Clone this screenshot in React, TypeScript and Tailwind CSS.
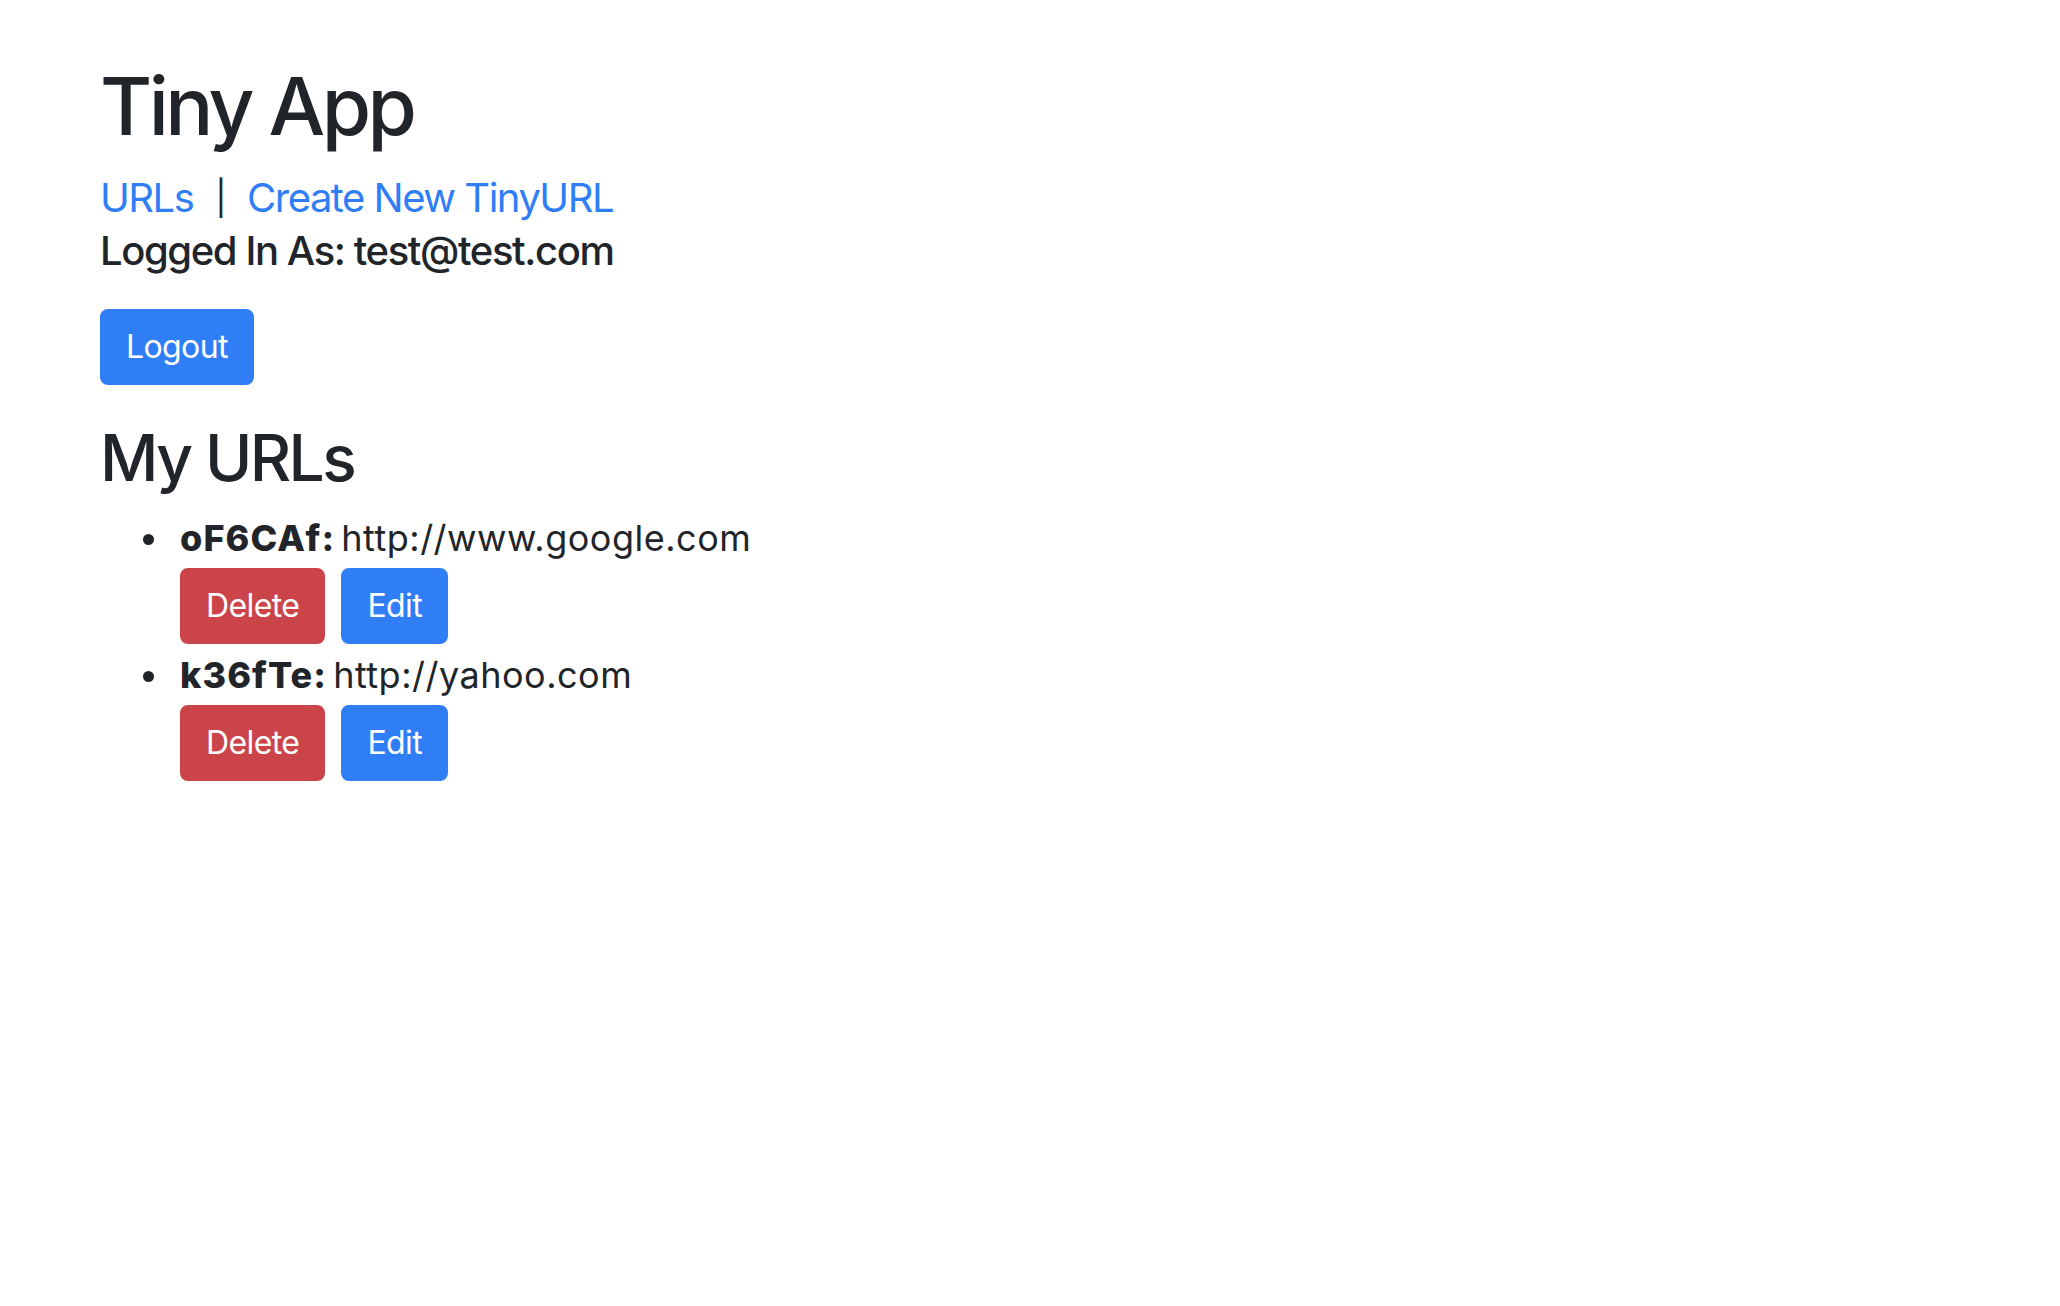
const urls = [
  { id: "oF6CAf", longURL: "http://www.google.com" },
  { id: "k36fTe", longURL: "http://yahoo.com" },
];

function Btn({ label, red }: { label: string; red?: boolean }) {
  return (
    <button
      type="button"
      className={`px-[24px] py-[12px] text-[32px] leading-[48px] tracking-[-0.6px] rounded-[8px] border-2 text-white ${
        red ? "bg-[#cb444a] border-[#cb444a]" : "bg-[#307ef6] border-[#307ef6]"
      }`}
    >
      {label}
    </button>
  );
}

export default function App() {
  return (
    <main
      className="min-h-screen bg-white text-[#212529] pl-[100px] pt-[58px]"
      style={{ fontFamily: "Inter, 'Noto Sans', sans-serif" }}
    >
      <h1 className="text-[80px] leading-[96px] font-medium tracking-[-3.6px]">Tiny App</h1>

      <nav className="mt-[20px] text-[40px] leading-[48px] tracking-[-1.5px] flex items-center">
        <a href="#" className="text-[#307ef6]">
          URLs
        </a>
        <span className="mx-[22px] text-[34px]">|</span>
        <a href="#" className="text-[#307ef6]">
          Create New TinyURL
        </a>
      </nav>
      <p className="mt-[5px] text-[40px] leading-[48px] font-medium tracking-[-1.4px]">
        Logged In As: test@test.com
      </p>

      <form className="mt-[34px]">
        <button
          type="button"
          className="px-[24px] py-[12px] text-[32px] leading-[48px] tracking-[-0.6px] rounded-[8px] border-2 text-white bg-[#307ef6] border-[#307ef6]"
        >
          Logout
        </button>
      </form>

      <h2 className="mt-[34px] text-[64px] leading-[77px] font-medium tracking-[-2.6px]">
        My URLs
      </h2>

      <ul className="mt-[14px] text-[36px] leading-[56px]">
        {urls.map((u) => (
          <li key={u.id} className="mb-[3px] flex">
            <span className="w-[80px] shrink-0 flex justify-end pr-[26px] pt-[24px]">
              <span className="block w-[11px] h-[11px] rounded-full bg-[#212529]" />
            </span>
            <div>
              <div>
                <span className="font-extrabold tracking-[1.1px]">{u.id}:</span>
                <span className="tracking-[0.5px] ml-[6px]">{u.longURL}</span>
              </div>
              <div className="mt-[2px] flex gap-[16px]">
                <Btn label="Delete" red />
                <Btn label="Edit" />
              </div>
            </div>
          </li>
        ))}
      </ul>
    </main>
  );
}
